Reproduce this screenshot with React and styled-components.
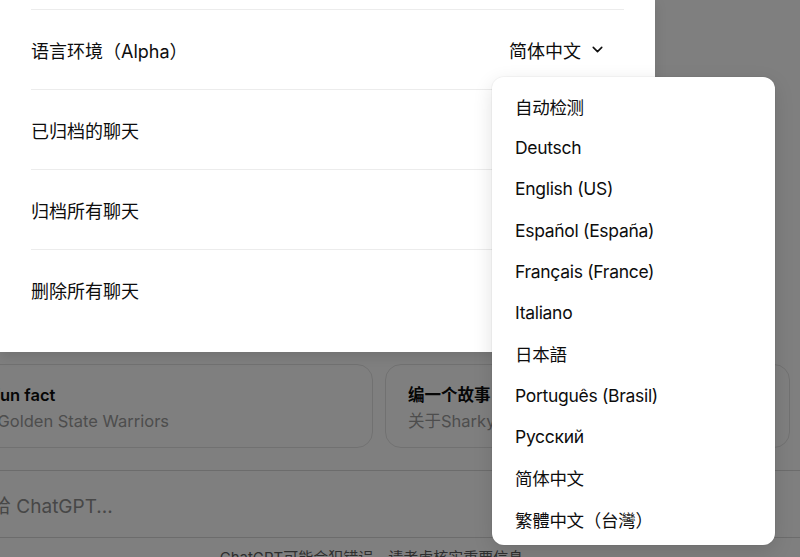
import React from 'react'
import styled, { createGlobalStyle } from 'styled-components'

const GlobalStyle = createGlobalStyle`
  html, body {
    margin: 0;
    padding: 0;
    background: #ffffff;
    overflow: hidden;
  }
  body {
    font-family: Inter, "Noto Sans CJK SC", "Noto Sans", sans-serif;
    color: #0d0d0d;
    -webkit-font-smoothing: antialiased;
  }
`

const Stage = styled.div`
  position: relative;
  width: 800px;
  height: 557px;
  overflow: hidden;
  background: #ffffff;
`

// the chat page behind the modal
const Page = styled.main`
  width: 900px;
  margin-left: -71px;
  padding-top: 364px;
  display: flex;
  flex-direction: column;
  align-items: center;
`

const Suggestions = styled.div`
  width: 822px;
  display: grid;
  grid-template-columns: 1fr 1fr;
  gap: 12px;
`

const SuggestionCard = styled.div`
  height: 84px;
  box-sizing: border-box;
  border: 1px solid #e3e3e3;
  border-radius: 16px;
  padding: 18px 22px 0 22px;
  white-space: nowrap;
  overflow: hidden;
`

const CardBody = styled.div`
  display: flex;
  flex-direction: column;
  gap: 2px;
  margin-left: ${(p) => p.$shift || 0}px;
`

const CardTitle = styled.div`
  font-size: 16.5px;
  font-weight: 600;
  line-height: 24px;
  color: #0d0d0d;
`

const CardSub = styled.div`
  font-size: 16.5px;
  line-height: 24px;
  color: #9b9b9b;
`

const Composer = styled.div`
  margin-top: 22px;
  width: 100%;
  height: 68px;
  box-sizing: border-box;
  border: 1px solid #d9d9d9;
  border-radius: 26px;
  display: flex;
  align-items: center;
  padding-left: 5px;
`

const Placeholder = styled.span`
  font-size: 19px;
  color: #8e8e8e;
  white-space: nowrap;
`

const Footnote = styled.div`
  margin-top: 10px;
  font-size: 15px;
  line-height: 20px;
  color: #5d5d5d;
  white-space: nowrap;
`

const Scrim = styled.div`
  position: absolute;
  inset: 0;
  background: rgba(0, 0, 0, 0.5);
`

const Dialog = styled.section`
  position: absolute;
  left: 0;
  top: 0;
  width: 655px;
  box-sizing: border-box;
  padding: 9px 31px 23px 31px;
  background: #ffffff;
  box-shadow: 0 4px 12px rgba(0, 0, 0, 0.12);
`

const SettingRow = styled.div`
  height: 80px;
  box-sizing: border-box;
  border-top: 1px solid #ececec;
  display: flex;
  align-items: center;
  justify-content: space-between;
  font-size: 18px;
`

const ValueButton = styled.button`
  border: 0;
  background: transparent;
  padding: 0;
  margin-right: 18px;
  display: flex;
  align-items: center;
  gap: 8px;
  font: inherit;
  font-size: 18px;
  color: #0d0d0d;
`

const Menu = styled.ul`
  position: absolute;
  left: 492px;
  top: 77px;
  width: 283px;
  margin: 0;
  padding: 8.5px 0 5.5px;
  list-style: none;
  background: #ffffff;
  border-radius: 12px;
  box-shadow: 0 6px 20px rgba(0, 0, 0, 0.12), 0 0 0 1px rgba(0, 0, 0, 0.03);
`

const MenuItem = styled.li`
  height: 41.3px;
  display: flex;
  align-items: center;
  padding-left: 23px;
  font-size: 17.5px;
  letter-spacing: -0.3px;
  color: #0d0d0d;
  white-space: nowrap;
`

const Chevron = () => (
  <svg width="17" height="17" viewBox="0 0 24 24" fill="none" stroke="#0d0d0d" strokeWidth="2.2" strokeLinecap="round" strokeLinejoin="round">
    <path d="M6 9l6 6 6-6" />
  </svg>
)

const languages = [
  '自动检测',
  'Deutsch',
  'English (US)',
  'Español (España)',
  'Français (France)',
  'Italiano',
  '日本語',
  'Português (Brasil)',
  'Русский',
  '简体中文',
  '繁體中文（台灣）',
]

const actions = ['已归档的聊天', '归档所有聊天', '删除所有聊天']

export default function App() {
  return (
    <Stage>
      <GlobalStyle />
      <Page>
        <Suggestions>
          <SuggestionCard>
            <CardBody $shift={-72}>
              <CardTitle>Tell me a fun fact</CardTitle>
              <CardSub>about the Golden State Warriors</CardSub>
            </CardBody>
          </SuggestionCard>
          <SuggestionCard>
            <CardBody>
              <CardTitle>编一个故事</CardTitle>
              <CardSub>关于Sharky，一只会说话的牙刷</CardSub>
            </CardBody>
          </SuggestionCard>
        </Suggestions>
        <Composer>
          <Placeholder>发消息给 ChatGPT...</Placeholder>
        </Composer>
        <Footnote>ChatGPT可能会犯错误。请考虑核实重要信息。</Footnote>
      </Page>
      <Scrim />
      <Dialog>
        <SettingRow>
          <span>语言环境（Alpha）</span>
          <ValueButton>
            简体中文
            <Chevron />
          </ValueButton>
        </SettingRow>
        {actions.map((label) => (
          <SettingRow key={label}>
            <span>{label}</span>
          </SettingRow>
        ))}
      </Dialog>
      <Menu>
        {languages.map((lang) => (
          <MenuItem key={lang}>{lang}</MenuItem>
        ))}
      </Menu>
    </Stage>
  )
}
